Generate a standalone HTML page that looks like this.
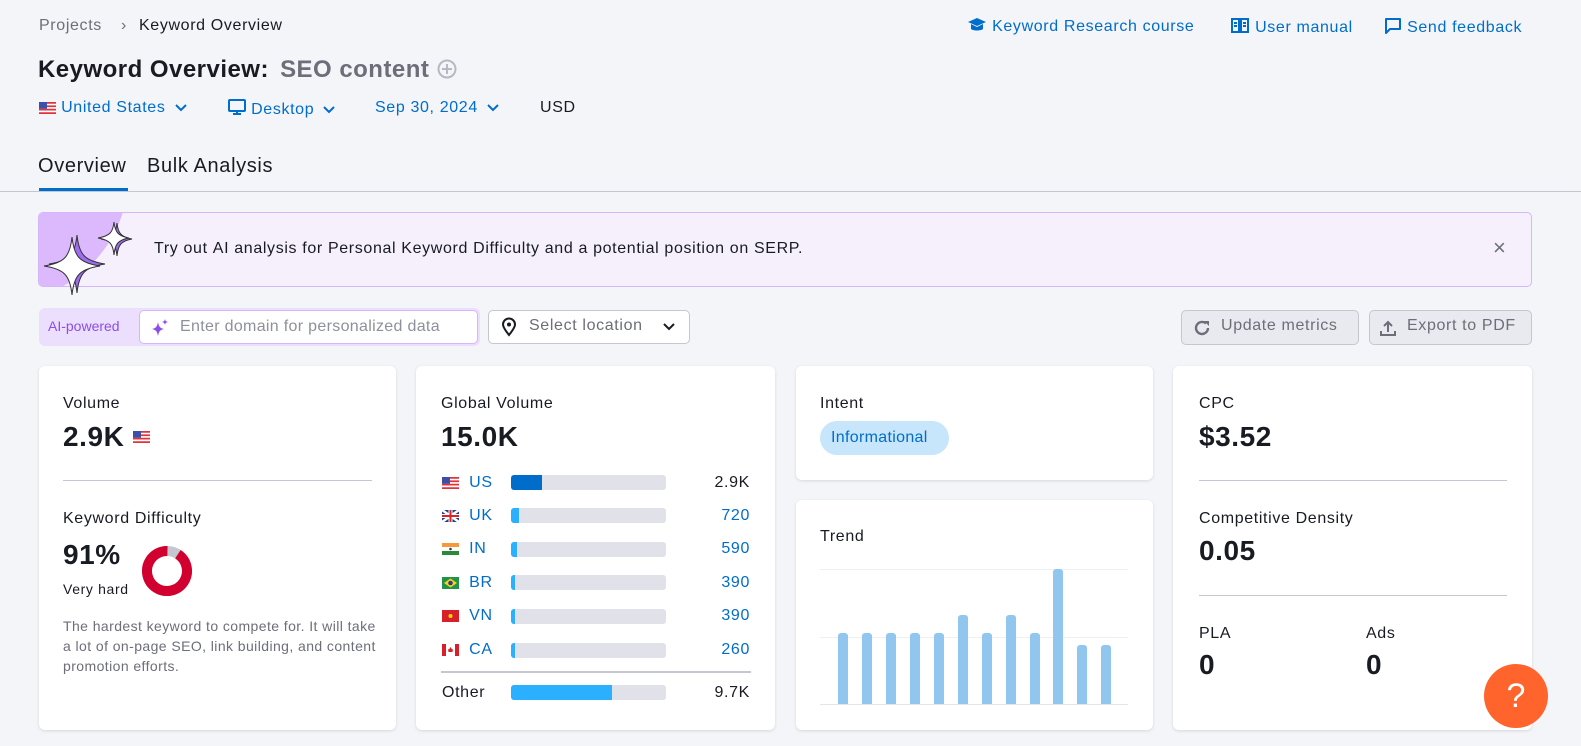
<!DOCTYPE html>
<html><head><meta charset="utf-8"><style>
*{box-sizing:border-box;margin:0;padding:0}
body{width:1581px;height:746px;overflow:hidden;background:#f4f5f9;font-family:"Liberation Sans",sans-serif;color:#191b23;position:relative;letter-spacing:.04em}
.a{position:absolute;white-space:nowrap}
.blue{color:#006dca}
.card{position:absolute;background:#fff;border-radius:6px;box-shadow:0 1px 3px rgba(0,0,0,.12)}
.lbl{font-size:16px}
.big{font-size:28px;font-weight:bold;letter-spacing:.02em}
.hr{position:absolute;height:1px;background:#c4c7cf}
.flag{display:inline-block;width:17px;height:12px;vertical-align:middle}
.bar{position:absolute;left:511px;width:155px;height:15px;background:#e0e1e9;border-radius:3px;overflow:hidden}
.bar i{display:block;height:100%;background:#2bafff}
.tb{position:absolute;bottom:42px;width:10px;background:#91c6ee;border-radius:3px 3px 0 0}
</style></head><body>

<div class="a" style="left:39px;top:17px;font-size:16px;color:#6c6e79">Projects <span style="margin:0 12px 0 14px">›</span><span style="color:#191b23">Keyword Overview</span></div>

<div class="a blue" style="left:967px;top:17px;font-size:16px">
<svg width="20" height="16" viewBox="0 0 20 16" style="vertical-align:-2px"><path d="M10 1L1 5l9 4 9-4z M4 7v5c2 2 10 2 12 0V7l-6 3z" fill="#006dca"/></svg> Keyword Research course</div>
<div class="a blue" style="left:1230px;top:17px;font-size:16px">
<svg width="20" height="18" viewBox="0 0 20 18" style="vertical-align:-3px"><path d="M2 2h7v13H2z M11 2h7v13h-7z" fill="none" stroke="#006dca" stroke-width="2"/><path d="M4 6h3M4 9h3M13 6h3M13 9h3" stroke="#006dca" stroke-width="2"/></svg> User manual</div>
<div class="a blue" style="left:1384px;top:17px;font-size:16px">
<svg width="18" height="18" viewBox="0 0 18 18" style="vertical-align:-3px"><path d="M2 2h14v10H6l-4 4z" fill="none" stroke="#006dca" stroke-width="2" stroke-linejoin="round"/></svg> Send feedback</div>

<div class="a" style="left:38px;top:56px;font-size:24px;font-weight:bold;letter-spacing:.02em">Keyword Overview: <span style="color:#6c6e79;margin-left:4px">SEO content</span> <svg width="20" height="20" viewBox="0 0 20 20" style="vertical-align:-2px"><circle cx="10" cy="10" r="8.5" fill="none" stroke="#b6b8c2" stroke-width="2"/><path d="M10 5v10M5 10h10" stroke="#b6b8c2" stroke-width="2"/></svg></div>

<div class="a blue" style="left:39px;top:99px;font-size:16px"><svg class="flag" viewBox="0 0 17 12"><rect width="17" height="12" fill="#fff"/><path d="M0 0h17v1.7H0zM0 3.4h17v1.7H0zM0 6.8h17v1.7H0zM0 10.2h17V12H0z" fill="#e0343c"/><rect width="8" height="6.8" fill="#3d4fa8"/></svg> United States <svg width="12" height="8" viewBox="0 0 12 8" style="margin-left:4px"><path d="M1 1l5 5 5-5" fill="none" stroke="#006dca" stroke-width="2"/></svg></div>
<div class="a blue" style="left:228px;top:99px;font-size:16px"><svg width="18" height="17" viewBox="0 0 18 17" style="vertical-align:-2px"><rect x="1" y="1" width="16" height="11" rx="1" fill="none" stroke="#006dca" stroke-width="2"/><path d="M9 12v3M5 15h8" stroke="#006dca" stroke-width="2"/></svg> Desktop <svg width="12" height="8" viewBox="0 0 12 8" style="margin-left:4px"><path d="M1 1l5 5 5-5" fill="none" stroke="#006dca" stroke-width="2"/></svg></div>
<div class="a blue" style="left:375px;top:99px;font-size:16px">Sep 30, 2024 <svg width="12" height="8" viewBox="0 0 12 8" style="margin-left:4px"><path d="M1 1l5 5 5-5" fill="none" stroke="#006dca" stroke-width="2"/></svg></div>
<div class="a" style="left:540px;top:99px;font-size:16px">USD</div>

<div class="a" style="left:38px;top:155px;font-size:20px">Overview</div>
<div class="a" style="left:39px;top:188px;width:89px;height:4px;background:#006dca"></div>
<div class="a" style="left:147px;top:155px;font-size:20px">Bulk Analysis</div>
<div class="a" style="left:0;top:191px;width:1581px;height:1px;background:#c4c7cf"></div>

<div class="a" style="left:38px;top:212px;width:1494px;height:75px;background:#f6f0fd;border:1px solid #d6b6fb;border-radius:5px;overflow:hidden">
 <div style="position:absolute;left:-170px;top:-170px;width:260px;height:260px;border-radius:50%;background:#dcb8fc"></div>
 <div class="a" style="left:115px;top:27px;font-size:16px">Try out <span style="font-weight:500">AI analysis</span> for Personal Keyword Difficulty and a potential position on SERP.</div>
 <div class="a" style="left:1454px;top:22px;font-size:22px;color:#6c6e79">×</div>
</div>
<svg class="a" style="left:40px;top:215px" width="100" height="85" viewBox="0 0 100 85"><path d="M32 22 C34 42 40 48 60 51 C40 54 34 60 32 80 C30 60 24 54 4 51 C24 48 30 42 32 22Z" fill="#9d6cf0" stroke="#333" stroke-width="1" transform="translate(5,-2)"/><path d="M32 22 C34 42 40 48 60 51 C40 54 34 60 32 80 C30 60 24 54 4 51 C24 48 30 42 32 22Z" fill="#fff" stroke="#333" stroke-width="1"/><path d="M74 7 C75 17 78 21 89 23 C78 25 75 29 74 40 C73 29 70 25 58 23 C70 21 73 17 74 7Z" fill="#9d6cf0" stroke="#333" stroke-width="1" transform="translate(3,1)"/><path d="M74 7 C75 17 78 21 89 23 C78 25 75 29 74 40 C73 29 70 25 58 23 C70 21 73 17 74 7Z" fill="#fff" stroke="#333" stroke-width="1"/></svg>

<div class="a" style="left:39px;top:308px;width:441px;height:38px;background:#ecdefd;border-radius:6px"></div>
<div class="a" style="left:48px;top:318px;font-size:14px;color:#8b4ee8;letter-spacing:0">AI-powered</div>
<div class="a" style="left:139px;top:310px;width:339px;height:34px;background:#fff;border:1px solid #d6b6fb;border-radius:5px"></div>
<svg class="a" style="left:150px;top:318px" width="20" height="20" viewBox="0 0 20 20"><path d="M8 4C9 9 10 10 14 11C10 12 9 13 8 18C7 13 6 12 2 11C6 10 7 9 8 4Z M15 1C15.5 3 16 3.5 18 4C16 4.5 15.5 5 15 7C14.5 5 14 4.5 12 4C14 3.5 14.5 3 15 1Z" fill="#8b4ee8"/></svg>
<div class="a" style="left:180px;top:318px;font-size:16px;color:#8e909b;letter-spacing:.02em">Enter domain for personalized data</div>
<div class="a" style="left:488px;top:310px;width:202px;height:34px;background:#fff;border:1px solid #c4c7cf;border-radius:5px"></div>
<svg class="a" style="left:500px;top:317px" width="18" height="20" viewBox="0 0 18 20"><path d="M9 18C5 13 3 10 3 7.5a6 6 0 0 1 12 0C15 10 13 13 9 18Z" fill="none" stroke="#191b23" stroke-width="2"/><circle cx="9" cy="7.5" r="2" fill="#191b23"/></svg>
<div class="a" style="left:529px;top:317px;font-size:16px;color:#6c6e79">Select location</div>
<svg class="a" style="left:663px;top:323px" width="12" height="8" viewBox="0 0 12 8"><path d="M1 1l5 5 5-5" fill="none" stroke="#191b23" stroke-width="2"/></svg>

<div class="a" style="left:1181px;top:310px;width:178px;height:35px;background:#e9eaf0;border:1px solid #c4c7cf;border-radius:5px"></div>
<svg class="a" style="left:1192px;top:318px" width="20" height="20" viewBox="0 0 20 20"><path d="M16 10a6 6 0 1 1-2-4.5" fill="none" stroke="#6c6e79" stroke-width="2.4"/><path d="M12 3h5v5z" fill="#6c6e79"/></svg>
<div class="a" style="left:1221px;top:317px;font-size:16px;color:#6c6e79">Update metrics</div>
<div class="a" style="left:1369px;top:310px;width:163px;height:35px;background:#e9eaf0;border:1px solid #c4c7cf;border-radius:5px"></div>
<svg class="a" style="left:1379px;top:318px" width="18" height="20" viewBox="0 0 18 20"><path d="M9 14V4M5 8l4-4 4 4M2 13v4h14v-4" fill="none" stroke="#6c6e79" stroke-width="2"/></svg>
<div class="a" style="left:1407px;top:317px;font-size:16px;color:#6c6e79">Export to PDF</div>

<!-- Volume card -->
<div class="card" style="left:39px;top:366px;width:357px;height:364px"></div>
<div class="a lbl" style="left:63px;top:395px">Volume</div>
<div class="a big" style="left:63px;top:421px">2.9K <svg class="flag" viewBox="0 0 17 12" style="vertical-align:3px"><rect width="17" height="12" fill="#fff"/><path d="M0 0h17v1.7H0zM0 3.4h17v1.7H0zM0 6.8h17v1.7H0zM0 10.2h17V12H0z" fill="#e0343c"/><rect width="8" height="6.8" fill="#3d4fa8"/></svg></div>
<div class="hr" style="left:63px;top:480px;width:309px"></div>
<div class="a lbl" style="left:63px;top:510px">Keyword Difficulty</div>
<div class="a big" style="left:63px;top:539px">91%</div>
<div class="a" style="left:63px;top:581px;font-size:14px">Very hard</div>
<svg class="a" style="left:141px;top:545px" width="52" height="52" viewBox="0 0 52 52"><circle cx="26" cy="26" r="20" fill="none" stroke="#c4c7cf" stroke-width="10"/><circle cx="26" cy="26" r="20" fill="none" stroke="#d1002f" stroke-width="10" stroke-dasharray="114.4 125.7" transform="rotate(-57 26 26)"/></svg>
<div class="a" style="left:63px;top:616px;font-size:14px;color:#6c6e79;line-height:20px;white-space:normal;width:318px;letter-spacing:.03em">The hardest keyword to compete for. It will take a lot of on-page SEO, link building, and content promotion efforts.</div>

<!-- Global volume -->
<div class="card" style="left:416px;top:366px;width:359px;height:364px"></div>
<div class="a lbl" style="left:441px;top:395px">Global Volume</div>
<div class="a big" style="left:441px;top:421px">15.0K</div>

<div class="a blue" style="left:442px;top:474px;font-size:16px"><svg class="flag" viewBox="0 0 17 12"><rect width="17" height="12" fill="#fff"/><path d="M0 0h17v1.7H0zM0 3.4h17v1.7H0zM0 6.8h17v1.7H0zM0 10.2h17V12H0z" fill="#e0343c"/><rect width="8" height="6.8" fill="#3d4fa8"/></svg>&nbsp; US</div>
<div class="bar" style="top:475px"><i style="width:31px;background:#006dca"></i></div>
<div class="a" style="left:700px;top:474px;width:50px;text-align:right;font-size:16px">2.9K</div>

<div class="a blue" style="left:442px;top:507px;font-size:16px"><svg class="flag" viewBox="0 0 17 12"><rect width="17" height="12" fill="#233e8b"/><path d="M0 0l17 12M17 0L0 12" stroke="#fff" stroke-width="2.5"/><path d="M8.5 0v12M0 6h17" stroke="#fff" stroke-width="4"/><path d="M8.5 0v12M0 6h17" stroke="#d22" stroke-width="2"/></svg>&nbsp; UK</div>
<div class="bar" style="top:508px"><i style="width:8px"></i></div>
<div class="a blue" style="left:700px;top:507px;width:50px;text-align:right;font-size:16px">720</div>

<div class="a blue" style="left:442px;top:540px;font-size:16px"><svg class="flag" viewBox="0 0 17 12"><rect width="17" height="4" fill="#f39a3a"/><rect y="4" width="17" height="4" fill="#fff"/><rect y="8" width="17" height="4" fill="#2a8a3a"/><circle cx="8.5" cy="6" r="1.3" fill="#336"/></svg>&nbsp; IN</div>
<div class="bar" style="top:542px"><i style="width:6px"></i></div>
<div class="a blue" style="left:700px;top:540px;width:50px;text-align:right;font-size:16px">590</div>

<div class="a blue" style="left:442px;top:574px;font-size:16px"><svg class="flag" viewBox="0 0 17 12"><rect width="17" height="12" fill="#21934a"/><path d="M8.5 1.5L15 6 8.5 10.5 2 6z" fill="#fcd116"/><circle cx="8.5" cy="6" r="2.3" fill="#2a3f8f"/></svg>&nbsp; BR</div>
<div class="bar" style="top:575px"><i style="width:4px"></i></div>
<div class="a blue" style="left:700px;top:574px;width:50px;text-align:right;font-size:16px">390</div>

<div class="a blue" style="left:442px;top:607px;font-size:16px"><svg class="flag" viewBox="0 0 17 12"><rect width="17" height="12" fill="#d8202a"/><circle cx="8.5" cy="6" r="2" fill="#ffd800"/></svg>&nbsp; VN</div>
<div class="bar" style="top:609px"><i style="width:4px"></i></div>
<div class="a blue" style="left:700px;top:607px;width:50px;text-align:right;font-size:16px">390</div>

<div class="a blue" style="left:442px;top:641px;font-size:16px"><svg class="flag" viewBox="0 0 17 12"><rect width="17" height="12" fill="#fff"/><rect width="4" height="12" fill="#d8202a"/><rect x="13" width="4" height="12" fill="#d8202a"/><path d="M8.5 3l1.5 2.5 1-.5-.5 3h-4l-.5-3 1 .5z" fill="#d8202a"/></svg>&nbsp; CA</div>
<div class="bar" style="top:643px"><i style="width:4px"></i></div>
<div class="a blue" style="left:700px;top:641px;width:50px;text-align:right;font-size:16px">260</div>

<div class="a" style="left:441px;top:671px;width:310px;height:2px;background:#c4c7cf"></div>
<div class="a" style="left:442px;top:684px;font-size:16px">Other</div>
<div class="bar" style="top:685px"><i style="width:101px"></i></div>
<div class="a" style="left:700px;top:684px;width:50px;text-align:right;font-size:16px">9.7K</div>

<!-- Intent -->
<div class="card" style="left:796px;top:366px;width:357px;height:114px"></div>
<div class="a lbl" style="left:820px;top:395px">Intent</div>
<div class="a" style="left:820px;top:421px;height:34px;width:129px;padding:0 11px;line-height:34px;border-radius:17px;background:#c7e5fb;color:#006dca;font-size:16px;letter-spacing:.02em">Informational</div>

<!-- Trend -->
<div class="card" style="left:796px;top:500px;width:357px;height:230px"></div>
<div class="a lbl" style="left:820px;top:528px">Trend</div>
<div class="a" style="left:820px;top:569px;width:308px;height:1px;background:#eeeff2"></div>
<div class="a" style="left:820px;top:637px;width:308px;height:1px;background:#eeeff2"></div>
<div class="a" style="left:820px;top:704px;width:308px;height:1px;background:#e4e5ea"></div>
<div class="tb" style="left:838px;height:71px"></div>
<div class="tb" style="left:862px;height:71px"></div>
<div class="tb" style="left:886px;height:71px"></div>
<div class="tb" style="left:910px;height:71px"></div>
<div class="tb" style="left:934px;height:71px"></div>
<div class="tb" style="left:958px;height:89px"></div>
<div class="tb" style="left:982px;height:71px"></div>
<div class="tb" style="left:1006px;height:89px"></div>
<div class="tb" style="left:1030px;height:71px"></div>
<div class="tb" style="left:1053px;height:135px"></div>
<div class="tb" style="left:1077px;height:59px"></div>
<div class="tb" style="left:1101px;height:59px"></div>

<!-- CPC -->
<div class="card" style="left:1173px;top:366px;width:359px;height:364px"></div>
<div class="a lbl" style="left:1199px;top:395px">CPC</div>
<div class="a big" style="left:1199px;top:421px">$3.52</div>
<div class="hr" style="left:1199px;top:480px;width:308px"></div>
<div class="a lbl" style="left:1199px;top:510px">Competitive Density</div>
<div class="a big" style="left:1199px;top:535px">0.05</div>
<div class="hr" style="left:1199px;top:595px;width:308px"></div>
<div class="a lbl" style="left:1199px;top:625px">PLA</div>
<div class="a big" style="left:1199px;top:649px">0</div>
<div class="a lbl" style="left:1366px;top:625px">Ads</div>
<div class="a big" style="left:1366px;top:649px">0</div>

<div class="a" style="left:1484px;top:664px;width:64px;height:64px;border-radius:50%;background:#ff642d;color:#fff;font-size:34px;text-align:center;line-height:64px;letter-spacing:0">?</div>
</body></html>
